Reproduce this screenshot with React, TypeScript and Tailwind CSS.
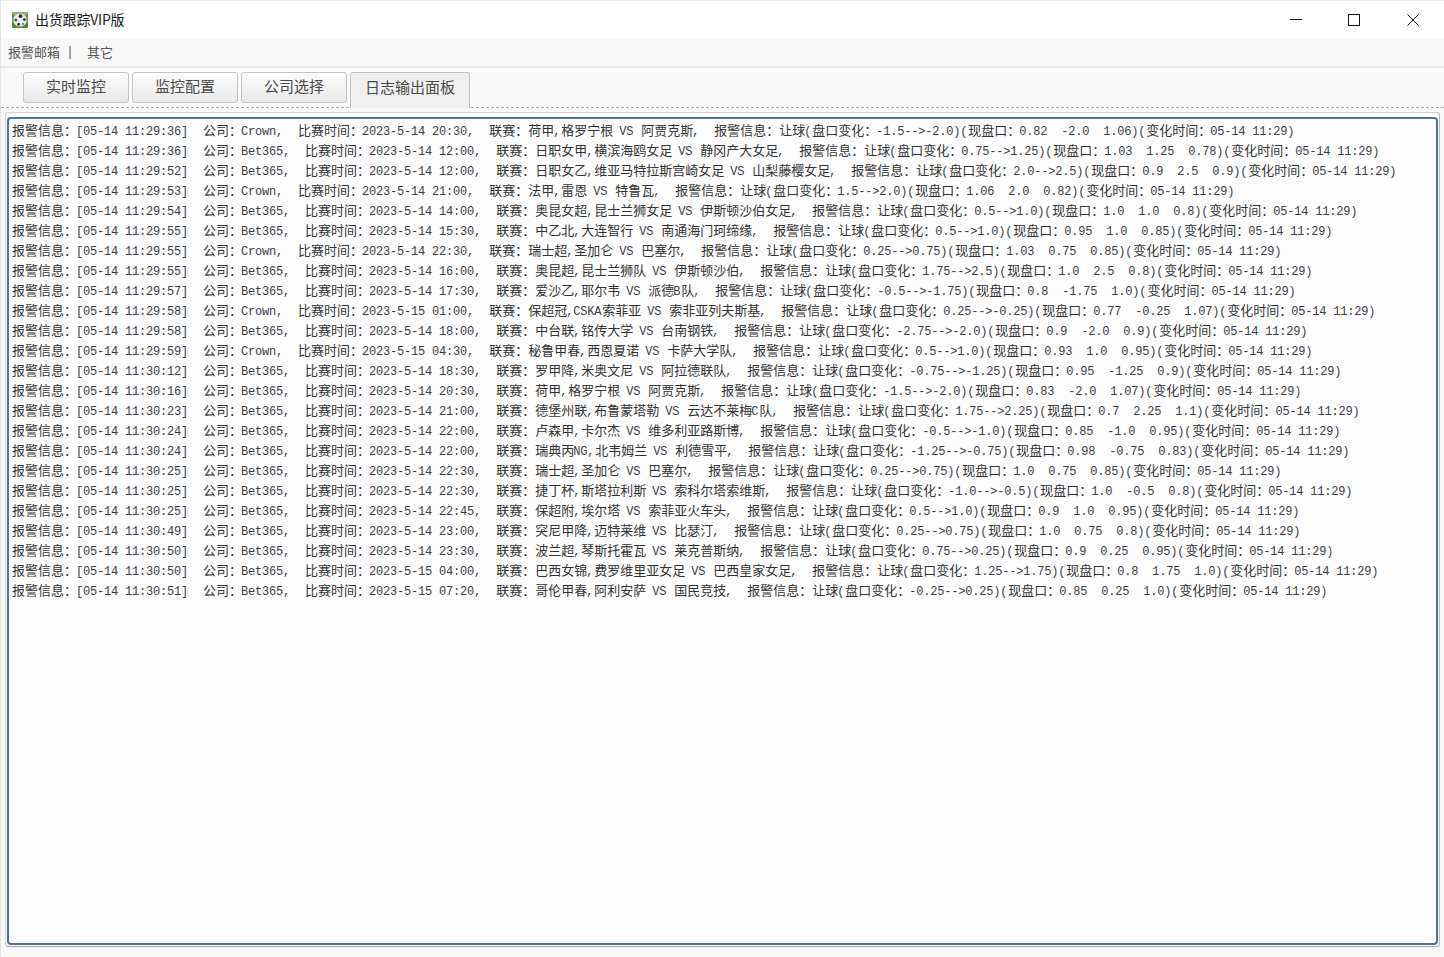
const ROWS: [string, string, string, string, string, string][] = [
  ["11:29:36", "Crown", "2023-5-14 20:30", "荷甲,格罗宁根 VS 阿贾克斯", "-1.5-->-2.0", "0.82  -2.0  1.06"],
  ["11:29:36", "Bet365", "2023-5-14 12:00", "日职女甲,横滨海鸥女足 VS 静冈产大女足", "0.75-->1.25", "1.03  1.25  0.78"],
  ["11:29:52", "Bet365", "2023-5-14 12:00", "日职女乙,维亚马特拉斯宫崎女足 VS 山梨藤樱女足", "2.0-->2.5", "0.9  2.5  0.9"],
  ["11:29:53", "Crown", "2023-5-14 21:00", "法甲,雷恩 VS 特鲁瓦", "1.5-->2.0", "1.06  2.0  0.82"],
  ["11:29:54", "Bet365", "2023-5-14 14:00", "奥昆女超,昆士兰狮女足 VS 伊斯顿沙伯女足", "0.5-->1.0", "1.0  1.0  0.8"],
  ["11:29:55", "Bet365", "2023-5-14 15:30", "中乙北,大连智行 VS 南通海门珂缔缘", "0.5-->1.0", "0.95  1.0  0.85"],
  ["11:29:55", "Crown", "2023-5-14 22:30", "瑞士超,圣加仑 VS 巴塞尔", "0.25-->0.75", "1.03  0.75  0.85"],
  ["11:29:55", "Bet365", "2023-5-14 16:00", "奥昆超,昆士兰狮队 VS 伊斯顿沙伯", "1.75-->2.5", "1.0  2.5  0.8"],
  ["11:29:57", "Bet365", "2023-5-14 17:30", "爱沙乙,耶尔韦 VS 派德B队", "-0.5-->-1.75", "0.8  -1.75  1.0"],
  ["11:29:58", "Crown", "2023-5-15 01:00", "保超冠,CSKA索菲亚 VS 索非亚列夫斯基", "0.25-->-0.25", "0.77  -0.25  1.07"],
  ["11:29:58", "Bet365", "2023-5-14 18:00", "中台联,铭传大学 VS 台南钢铁", "-2.75-->-2.0", "0.9  -2.0  0.9"],
  ["11:29:59", "Crown", "2023-5-15 04:30", "秘鲁甲春,西恩夏诺 VS 卡萨大学队", "0.5-->1.0", "0.93  1.0  0.95"],
  ["11:30:12", "Bet365", "2023-5-14 18:30", "罗甲降,米奥文尼 VS 阿拉德联队", "-0.75-->-1.25", "0.95  -1.25  0.9"],
  ["11:30:16", "Bet365", "2023-5-14 20:30", "荷甲,格罗宁根 VS 阿贾克斯", "-1.5-->-2.0", "0.83  -2.0  1.07"],
  ["11:30:23", "Bet365", "2023-5-14 21:00", "德堡州联,布鲁蒙塔勒 VS 云达不莱梅C队", "1.75-->2.25", "0.7  2.25  1.1"],
  ["11:30:24", "Bet365", "2023-5-14 22:00", "卢森甲,卡尔杰 VS 维多利亚路斯博", "-0.5-->-1.0", "0.85  -1.0  0.95"],
  ["11:30:24", "Bet365", "2023-5-14 22:00", "瑞典丙NG,北韦姆兰 VS 利德雪平", "-1.25-->-0.75", "0.98  -0.75  0.83"],
  ["11:30:25", "Bet365", "2023-5-14 22:30", "瑞士超,圣加仑 VS 巴塞尔", "0.25-->0.75", "1.0  0.75  0.85"],
  ["11:30:25", "Bet365", "2023-5-14 22:30", "捷丁杯,斯塔拉利斯 VS 索科尔塔索维斯", "-1.0-->-0.5", "1.0  -0.5  0.8"],
  ["11:30:25", "Bet365", "2023-5-14 22:45", "保超附,埃尔塔 VS 索菲亚火车头", "0.5-->1.0", "0.9  1.0  0.95"],
  ["11:30:49", "Bet365", "2023-5-14 23:00", "突尼甲降,迈特莱维 VS 比瑟汀", "0.25-->0.75", "1.0  0.75  0.8"],
  ["11:30:50", "Bet365", "2023-5-14 23:30", "波兰超,琴斯托霍瓦 VS 莱克普斯纳", "0.75-->0.25", "0.9  0.25  0.95"],
  ["11:30:50", "Bet365", "2023-5-15 04:00", "巴西女锦,费罗维里亚女足 VS 巴西皇家女足", "1.25-->1.75", "0.8  1.75  1.0"],
  ["11:30:51", "Bet365", "2023-5-15 07:20", "哥伦甲春,阿利安萨 VS 国民竞技", "-0.25-->0.25", "0.85  0.25  1.0"],
];

function Mixed({ text }: { text: string }) {
  const parts = text.split(/([\x00-\x7f]+)/).filter(Boolean);
  return (
    <>
      {parts.map((p, i) =>
        /^[\x00-\x7f]/.test(p) ? (
          <span key={i} className="-ml-px mr-px inline-block font-['Liberation_Mono',monospace] text-[12px] tracking-[-0.2px] text-[#3c3c46]">
            {p}
          </span>
        ) : (
          <span key={i} className="font-['Noto_Sans_CJK_SC',sans-serif] text-[13px] text-[#333333]">
            {p}
          </span>
        ),
      )}
    </>
  );
}

function Tab({ label }: { label: string }) {
  return (
    <div className="flex h-[31px] w-[106px] items-center justify-center rounded-[3px] border border-[#c4c4c4] bg-gradient-to-b from-[#fcfcfc] to-[#e9e9e9] pb-[2px] font-['Noto_Sans_CJK_SC',sans-serif] text-[15px] text-[#4a4a4a]">
      {label}
    </div>
  );
}

function Ball() {
  return (
    <svg width="16" height="16" viewBox="0 0 16 16" className="shrink-0">
      <rect width="16" height="16" fill="#6f9a50" />
      <rect y="11" width="16" height="5" fill="#55883a" />
      <rect width="16" height="3" fill="#8fae78" />
      <circle cx="8" cy="8" r="6.6" fill="#f0f0ec" />
      <circle cx="8.5" cy="4.2" r="1.9" fill="#33352f" />
      <circle cx="3.8" cy="8" r="1.5" fill="#4a4c46" />
      <circle cx="12.4" cy="7.6" r="1.5" fill="#3f413b" />
      <circle cx="6.6" cy="12.2" r="1.5" fill="#3a3c36" />
      <circle cx="11" cy="12" r="1" fill="#6a6c66" />
    </svg>
  );
}

export default function App() {
  return (
    <div className="flex h-[957px] w-[1444px] flex-col overflow-hidden border-l border-[#e4e4e4] bg-[#f9f9f9] font-['Noto_Sans_CJK_SC',sans-serif]">
      <header className="flex h-[38px] shrink-0 items-center border-t border-[#eeeeee] bg-white pl-[11px]">
        <Ball />
        <span className="ml-[7px] text-[14px] tracking-[-0.2px] text-[#1a1a1a]">出货跟踪VIP版</span>
        <div className="ml-auto flex h-full items-center">
          <div className="flex w-[58px] items-center justify-center">
            <svg width="12" height="12" viewBox="0 0 12 12"><path d="M0 5.5H12" stroke="#111" strokeWidth="1" /></svg>
          </div>
          <div className="flex w-[58px] items-center justify-center">
            <svg width="12" height="12" viewBox="0 0 12 12"><rect x="0.5" y="0.5" width="11" height="11" fill="none" stroke="#111" strokeWidth="1" /></svg>
          </div>
          <div className="flex w-[61px] items-center justify-center pr-[1px]">
            <svg width="12" height="12" viewBox="0 0 12 12"><path d="M0.5 0.5L11.5 11.5M11.5 0.5L0.5 11.5" stroke="#111" strokeWidth="1" /></svg>
          </div>
        </div>
      </header>

      <nav className="flex h-[28px] shrink-0 items-center bg-[#f8f8f8] pl-[7px] text-[13px] text-[#555555]">
        <span>报警邮箱</span>
        <span className="ml-[9px] h-[13px] w-[2px] bg-gradient-to-r from-[#e0a060] to-[#6f9fd0]" />
        <span className="ml-[16px]">其它</span>
      </nav>

      <div className="flex h-[42px] shrink-0 items-start gap-[3px] border-t-2 border-b border-t-[#e2e8ee] border-b-[#aaaaaa] [border-bottom-style:dashed] pl-[22px] pt-[4px]">
        <Tab label="实时监控" />
        <Tab label="监控配置" />
        <Tab label="公司选择" />
        <div className="z-10 flex h-[36px] w-[120px] items-center justify-center rounded-t-[3px] border border-b-0 border-[#c4c4c4] bg-[#efefef] pb-[6px] text-[15px] text-[#4a4a4a]">
          日志输出面板
        </div>
      </div>

      <main className="mb-[10px] ml-[4px] mr-[4px] mt-[4px] flex min-h-0 flex-1 flex-col rounded-[3px] border border-[#d0d0d0] border-b-[#a8a8a8] border-r-[#b8b8b8] bg-white pb-px pl-px pr-px pt-[4px]">
        <section className="flex-1 rounded-[4px] border-2 border-[#4a74a5] bg-[#fdfdfd] pl-[3px]">
          {ROWS.map((r, i) => {
            const line = `报警信息：[05-14 ${r[0]}]  公司：${r[1]},  比赛时间：${r[2]},  联赛：${r[3]},  报警信息：让球(盘口变化：${r[4]})(现盘口：${r[5]})(变化时间：05-14 11:29)`;
            return (
              <div key={i} className="h-[20px] whitespace-pre leading-[18px]">
                <Mixed text={line} />
              </div>
            );
          })}
        </section>
      </main>
    </div>
  );
}
